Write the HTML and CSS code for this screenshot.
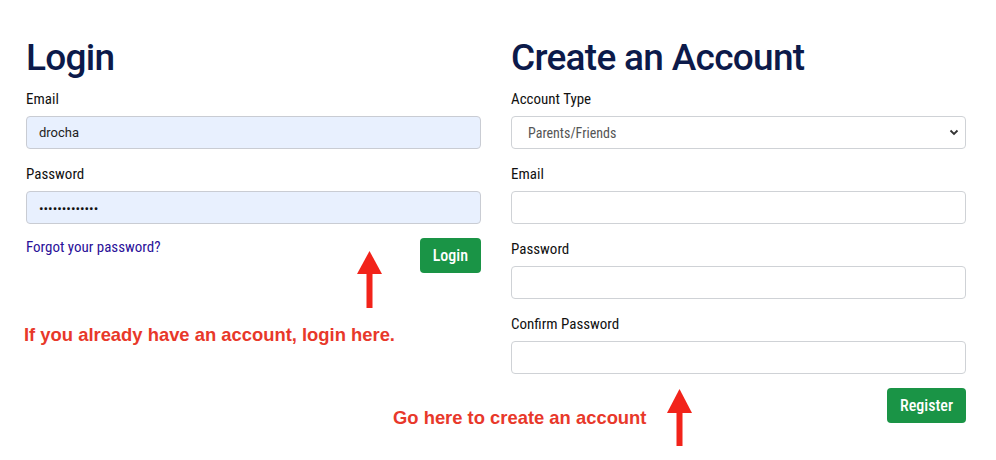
FILE: index.html
```html
<!DOCTYPE html>
<html>
<head>
    <title>Login</title>
    <link rel="stylesheet" href="styles.css">
</head>
<body>
    <div class="page">
        <div class="columns">
            <form class="column">
                <h1>Login</h1>
                <div class="field">
                    <label for="loginEmail">Email</label>
                    <input type="text" id="loginEmail" class="autofill" value="drocha">
                </div>
                <div class="field">
                    <label for="loginPassword">Password</label>
                    <input type="password" id="loginPassword" class="autofill" value="passwordpassw">
                </div>
                <div class="actions">
                    <a href="#" class="forgot">Forgot your password?</a>
                    <button type="button" class="btn">Login</button>
                </div>
            </form>

            <form class="column">
                <h1>Create an Account</h1>
                <div class="field">
                    <label for="accountType">Account Type</label>
                    <div class="select-wrap">
                        <select id="accountType">
                            <option>Parents/Friends</option>
                            <option>Student</option>
                        </select>
                        <svg class="chevron" width="10" height="7" viewBox="0 0 10 7">
                            <path d="M1.5 1.5 L5 5 L8.5 1.5" fill="none" stroke="#333" stroke-width="1.8"/>
                        </svg>
                    </div>
                </div>
                <div class="field">
                    <label for="regEmail">Email</label>
                    <input type="text" id="regEmail">
                </div>
                <div class="field">
                    <label for="regPassword">Password</label>
                    <input type="password" id="regPassword">
                </div>
                <div class="field">
                    <label for="regConfirm">Confirm Password</label>
                    <input type="password" id="regConfirm">
                </div>
                <div class="actions right">
                    <button type="button" class="btn">Register</button>
                </div>
            </form>
        </div>

        <!-- annotations drawn over the page -->
        <p class="note note-login">If you already have an account, login here.</p>
        <p class="note note-register">Go here to create an account</p>
        <svg class="arrow arrow-login" width="25" height="57" viewBox="0 0 25 57">
            <polygon points="12.5,0 25,23 0,23" fill="#f2231a"/>
            <rect x="9.5" y="22" width="6" height="35" fill="#f2231a"/>
        </svg>
        <svg class="arrow arrow-register" width="25" height="57" viewBox="0 0 25 57">
            <polygon points="12.5,0 25,24 0,24" fill="#f2231a"/>
            <rect x="9.5" y="23" width="6" height="34" fill="#f2231a"/>
        </svg>
    </div>
</body>
</html>
```

FILE: styles.css
```css
body {
    margin: 0;
    background-color: #fff;
    font-family: "Roboto Condensed", Roboto, sans-serif;
    font-stretch: condensed;
    color: #111;
}
.page {
    position: relative;
    width: 940px;
    padding: 34px 0 0 26px;
    height: 426px;
}
.columns {
    display: flex;
    gap: 30px;
}
.column {
    width: 455px;
    margin: 0;
}
h1 {
    font-family: Roboto, sans-serif;
    font-stretch: normal;
    font-weight: 500;
    font-size: 37px;
    line-height: 48px;
    color: #0c1a4a;
    margin: 0 0 6px;
    letter-spacing: -0.7px;
}
.field {
    margin-bottom: 14px;
}
label {
    display: block;
    font-size: 15px;
    line-height: 22px;
    margin-bottom: 6px;
    color: #111;
}
input, select {
    box-sizing: border-box;
    width: 100%;
    height: 33px;
    padding: 0 12px;
    border: 1px solid #cfd2d6;
    border-radius: 4px;
    background-color: #fff;
    font-family: Roboto, sans-serif;
    font-stretch: normal;
    font-size: 13px;
    color: #222;
}
input.autofill {
    background-color: #e8f0fe;
    border-color: #c9ccd3;
}
input[type="password"].autofill {
    font-size: 13.5px;
    color: #111;
}
.select-wrap {
    position: relative;
}
select {
    appearance: none;
    -webkit-appearance: none;
    padding-left: 16px;
    color: #555;
    font-family: "Roboto Condensed", Roboto, sans-serif;
    font-stretch: condensed;
    font-size: 14px;
}
.chevron {
    position: absolute;
    right: 7px;
    top: 13px;
}
.actions {
    display: flex;
    justify-content: space-between;
    align-items: flex-start;
    margin-top: 3px;
}
.actions.right {
    justify-content: flex-end;
}
.forgot {
    font-size: 15px;
    line-height: 20px;
    color: #2a1099;
    text-decoration: none;
    margin-top: -1px;
}
.btn {
    height: 35px;
    padding: 0 13px;
    background-color: #1a9446;
    color: #fff;
    border: none;
    border-radius: 4px;
    font-family: "Roboto Condensed", Roboto, sans-serif;
    font-stretch: condensed;
    font-weight: 500;
    font-size: 16px;
    cursor: pointer;
}
.note {
    position: absolute;
    margin: 0;
    font-family: "Liberation Sans", Arial, sans-serif;
    font-stretch: normal;
    font-weight: bold;
    font-size: 18.4px;
    line-height: 20px;
    color: #e8382a;
    white-space: nowrap;
}
.note-login {
    left: 24px;
    top: 325px;
}
.note-register {
    left: 393px;
    top: 408px;
}
.arrow {
    position: absolute;
}
.arrow-login {
    left: 357px;
    top: 251px;
}
.arrow-register {
    left: 667px;
    top: 389px;
}
```
